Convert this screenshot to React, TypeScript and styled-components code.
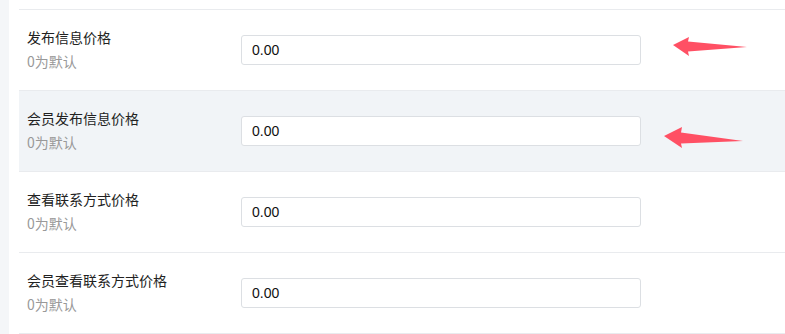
import React from "react";
import styled, { createGlobalStyle } from "styled-components";

const GlobalStyle = createGlobalStyle`
  html, body {
    margin: 0;
    padding: 0;
    background: #ffffff;
    font-family: "Noto Sans CJK SC", "Liberation Sans", sans-serif;
  }
`;

const fields = [
  { label: "发布信息价格", value: "0.00", shaded: false },
  { label: "会员发布信息价格", value: "0.00", shaded: true },
  { label: "查看联系方式价格", value: "0.00", shaded: false },
  { label: "会员查看联系方式价格", value: "0.00", shaded: false },
];

// annotation arrows drawn over the form
const arrows = [
  { left: 671, top: 36, d: "M2 9 L18 1 L17 5.5 L76 11 L17 15.5 L18 20 Z" },
  { left: 663, top: 126, d: "M1 10 L19 1 L18 6.5 L80 15 L18 17.5 L19 22 Z" },
];

export default function App() {
  return (
    <>
      <GlobalStyle />
      <Page>
        <SideStrip />
        <Content>
          <Form>
            {fields.map((f) => (
              <Row key={f.label} $shaded={f.shaded}>
                <LabelBox>
                  <Label>{f.label}</Label>
                  <Hint>0为默认</Hint>
                </LabelBox>
                <PriceInput defaultValue={f.value} />
              </Row>
            ))}
          </Form>
        </Content>
        {arrows.map((a, i) => (
          <Arrow
            key={i}
            style={{ left: a.left, top: a.top }}
            width="84"
            height="24"
            viewBox="0 0 84 24">
            <path d={a.d} fill="#ff5064" />
          </Arrow>
        ))}
      </Page>
    </>
  );
}

const Page = styled.div`
  position: relative;
  width: 785px;
  height: 334px;
  display: flex;
  overflow: hidden;
`;
const SideStrip = styled.div`
  width: 9px;
  flex-shrink: 0;
  background-color: #f4f6f8;
`;
const Content = styled.div`
  flex: 1;
  padding: 9px 0 0 10px;
`;
const Form = styled.div`
  display: flex;
  flex-direction: column;
  border-bottom: 1px solid #e9ebee;
`;
const Row = styled.div<{ $shaded: boolean }>`
  height: 80px;
  display: flex;
  align-items: center;
  border-top: 1px solid #e9ebee;
  background-color: ${(p) => (p.$shaded ? "#f1f4f7" : "#ffffff")};
`;
const LabelBox = styled.div`
  width: 214px;
  padding: 0 0 3px 8px;
  display: flex;
  flex-direction: column;
  gap: 4px;
`;
const Label = styled.span`
  font-size: 14px;
  line-height: 20px;
  color: #222222;
`;
const Hint = styled.span`
  font-size: 14px;
  line-height: 20px;
  color: #999999;
`;
const PriceInput = styled.input`
  box-sizing: border-box;
  width: 400px;
  height: 30px;
  padding: 0 10px;
  border: 1px solid #dcdfe3;
  border-radius: 3px;
  background: #ffffff;
  font-family: "Liberation Sans", Arial, sans-serif;
  font-size: 14px;
  color: #111111;
  outline: none;
`;
const Arrow = styled.svg`
  position: absolute;
`;
